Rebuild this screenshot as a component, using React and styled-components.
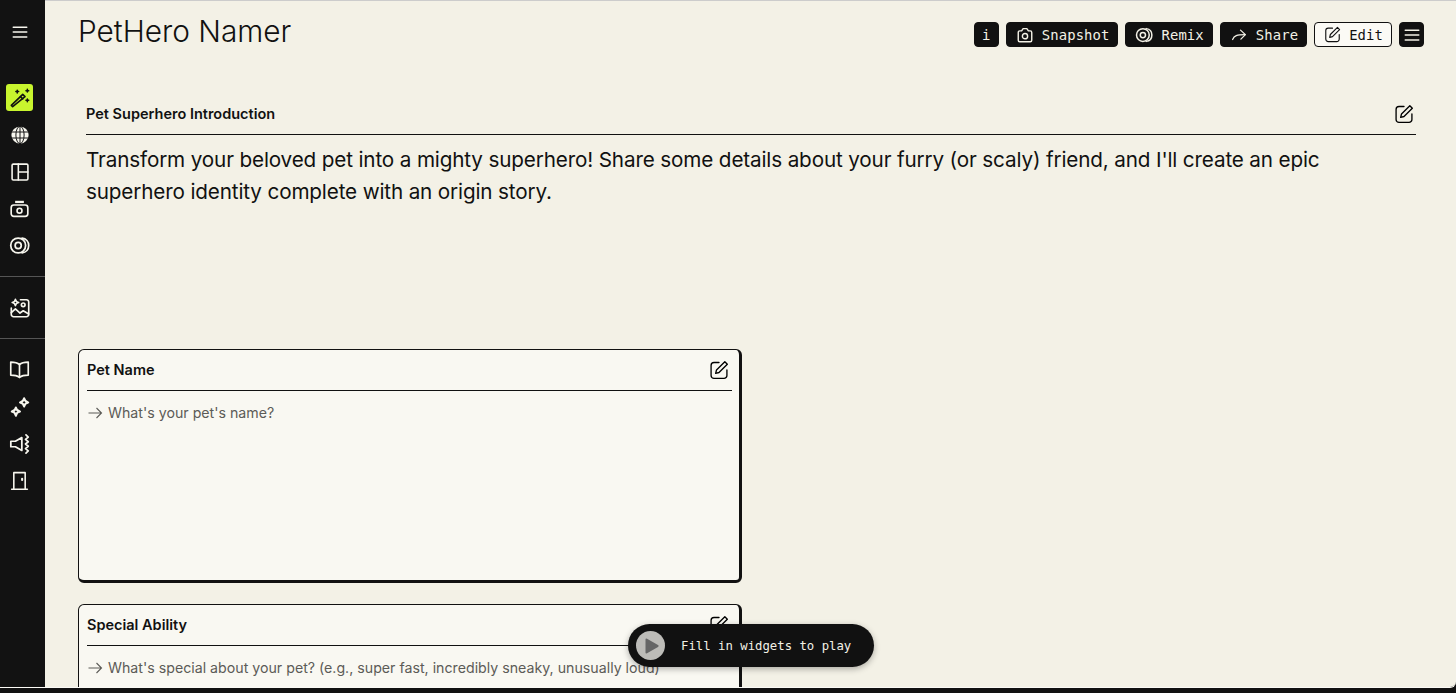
import React from 'react'
import styled, { createGlobalStyle } from 'styled-components'

const Global = createGlobalStyle`
html, body {
    margin: 0;
    height: 100%;
    background: #111;
}
* { box-sizing: border-box; }
`

const sans = `"Inter", "Noto Sans", sans-serif`
const mono = `"DejaVu Sans Mono", "Liberation Mono", monospace`

const Page = styled.div`
position: relative;
height: 693px;
overflow: hidden;
display: flex;
flex-direction: column;
background: #111;
`
const Body = styled.div`
display: flex;
height: 688px;
border-bottom: 1px solid #fbfaf5;
border-bottom-right-radius: 6px;
overflow: hidden;
flex: none;
`
const Rail = styled.nav`
width: 45px;
flex: none;
background: #121212;
color: #f7f6ee;
display: flex;
flex-direction: column;
`
const RailSection = styled.div`
padding: ${props => props.first ? '13px 0 12px' : '12px 0'};
border-bottom: ${props => props.last ? 'none' : '1px solid #555'};
`
const RailItem = styled.div`
height: 37px;
padding-right: 6px;
display: flex;
align-items: center;
justify-content: center;
margin-bottom: ${props => props.spaced ? '29px' : '0'};
`
const ActiveItem = styled.div`
width: 27px;
height: 27px;
border-radius: 3px;
background: #c8f52e;
color: #111;
display: flex;
align-items: center;
justify-content: center;
`
const Content = styled.main`
flex: 1;
min-width: 0;
background: #f3f1e6;
border-top: 1px solid #ccc;
padding: 0 32px 0 33px;
overflow: hidden;
`
const Header = styled.header`
height: 94px;
display: flex;
justify-content: space-between;
align-items: flex-start;
`
const Title = styled.h1`
margin: 11px 0 0;
font-family: ${sans};
font-weight: 300;
font-size: 29.8px;
line-height: 38px;
color: #111;
`
const Toolbar = styled.div`
display: flex;
gap: 7px;
margin-top: 21px;
`
const ToolButton = styled.button`
height: 25px;
min-width: 25px;
padding: ${props => props.square ? '0' : '0 8px 0 9px'};
display: flex;
align-items: center;
justify-content: center;
gap: 8px;
border-radius: 4px;
border: 1px solid #111;
background: ${props => props.light ? '#fbfaf5' : '#111'};
color: ${props => props.light ? '#111' : '#f3f1e6'};
font-family: ${mono};
font-size: 13.9px;
font-weight: 400;
letter-spacing: 0.1px;
`
const Intro = styled.section`
margin: 0 8px 0 8px;
height: 254px;
`
const IntroHead = styled.div`
height: 40px;
display: flex;
justify-content: space-between;
align-items: center;
padding-right: 2px;
padding-bottom: 2px;
border-bottom: 1px solid #111;
`
const Label = styled.span`
font-family: ${sans};
font-size: 14.5px;
font-weight: 600;
color: #111;
`
const IntroText = styled.p`
margin: 9px 0 0;
font-family: ${sans};
font-size: 20.7px;
letter-spacing: -0.15px;
line-height: 32px;
color: #111;
`
const Card = styled.section`
width: 664px;
height: 234px;
flex: none;
margin-bottom: 21px;
padding: 0 7px 0 8px;
background: #f9f8f2;
border: 1px solid #111;
border-right-width: 3px;
border-bottom-width: 3px;
border-radius: 6px;
`
const CardHead = styled.div`
height: 41px;
display: flex;
justify-content: space-between;
align-items: center;
padding-right: 3px;
padding-bottom: 1px;
border-bottom: 1px solid #111;
`
const Prompt = styled.div`
margin-top: 13px;
display: flex;
align-items: center;
gap: 5px;
padding-left: 1px;
font-family: ${sans};
font-size: 14.2px;
line-height: 18px;
color: #5c5b57;
white-space: nowrap;
`
const PlayPill = styled.div`
position: absolute;
left: 628px;
top: 624px;
width: 246px;
height: 43px;
border-radius: 22px;
padding-left: 8px;
background: #111;
box-shadow: 0 2px 6px rgba(0, 0, 0, 0.3);
display: flex;
align-items: center;
gap: 16px;
color: #f3f1e6;
font-family: ${mono};
font-size: 12.3px;
`
const PlayDisc = styled.div`
width: 29px;
height: 29px;
border-radius: 50%;
background: #bdbcb8;
display: flex;
align-items: center;
justify-content: center;
`

const Icon = ({ size = 20, width = 1.8, children }) => (
    <svg width={size} height={size} viewBox="0 0 24 24" fill="none" stroke="currentColor" strokeWidth={width} strokeLinecap="round" strokeLinejoin="round">
        {children}
    </svg>
)

const MenuIcon = () => <Icon size={18} width={2}><path d="M3 5.5h18M3 12h18M3 18.5h18" /></Icon>
const WandIcon = () => (
    <Icon size={22} width={1.7}>
        <path d="M4 21.500 2.500 20 15 8l2.500 2.500z" />
        <path d="m12.500 10.500 2.500 2.500" />
        <path d="M9 3.500v3M7.500 5h3M20 2.500v3M18.500 4h3M20 13v3M18.500 14.500h3" />
    </Icon>
)
const GlobeIcon = () => (
    <svg width="18" height="18" viewBox="0 0 24 24" fill="currentColor" stroke="#121212" strokeWidth="1.3">
        <circle cx="12" cy="12" r="11.500" stroke="none" />
        <path d="M0 8h24M0 16h24M12 0v24" fill="none" />
        <ellipse cx="12" cy="12" rx="5.500" ry="11.500" fill="none" />
    </svg>
)
const LayoutIcon = () => (
    <Icon size={20} width={1.9}>
        <rect x="2.500" y="2.500" width="19" height="19" rx="1.500" />
        <path d="M10 2.500v19M10 12h11.500" />
    </Icon>
)
const CameraRetroIcon = () => (
    <Icon size={21} width={1.9}>
        <rect x="2.500" y="8" width="19" height="13" rx="3" />
        <circle cx="12" cy="14.500" r="2.800" />
        <path d="M7 4.500h10" strokeWidth="2.600" strokeLinecap="butt" />
    </Icon>
)
const RemixIcon = ({ size = 21 }) => (
    <Icon size={size} width={2}>
        <circle cx="10.500" cy="12" r="8.500" />
        <circle cx="10.500" cy="12" r="3.500" />
        <path d="M15 3.500c4.500.5 7.500 4 7.500 8.500s-3 8-7.500 8.500" />
    </Icon>
)
const GalleryIcon = () => (
    <Icon size={22} width={1.8}>
        <path d="M12.500 3H19a2.500 2.500 0 0 1 2.500 2.500V19a2.500 2.500 0 0 1-2.500 2.500H5A2.500 2.500 0 0 1 2.500 19v-7" />
        <circle cx="15.500" cy="8.500" r="2" />
        <path d="m2.500 17 4.500-4 5 4.500 3.500-2.500 6 3.500" />
        <path d="M7 2.500c.4 2.200 1.300 3.100 3.500 3.500-2.200.4-3.100 1.300-3.500 3.500-.4-2.200-1.300-3.100-3.500-3.500 2.200-.4 3.100-1.300 3.500-3.500z" />
    </Icon>
)
const BookIcon = () => (
    <Icon size={21} width={1.9}>
        <path d="M12 6.500C10 4.500 7 3.500 2 3.500v15c5 0 8 1 10 2.500 2-1.500 5-2.500 10-2.500v-15c-5 0-8 1-10 3z" />
        <path d="M12 6.500V21" />
    </Icon>
)
const SparkIcon = () => (
    <Icon size={22} width={2.2}>
        <path d="M16.500 2.500c.5 2.700 1.800 4 4.500 4.500-2.700.5-4 1.800-4.500 4.500-.5-2.700-1.800-4-4.500-4.500 2.700-.5 4-1.800 4.500-4.500z" />
        <path d="M7.500 12.500c.5 2.700 1.800 4 4.500 4.500-2.700.5-4 1.800-4.500 4.500-.5-2.700-1.800-4-4.500-4.500 2.700-.5 4-1.800 4.500-4.500z" />
    </Icon>
)
const SpeakerIcon = () => (
    <Icon size={22} width={1.9}>
        <path d="M2 9h5l7-4v14l-7-4H2z" />
        <path d="M18.500 2 21 4.500 18 7l3 2.500L18 12l3 2.500-3 2.500 3 2.500-2.500 2.500" />
    </Icon>
)
const DoorIcon = () => (
    <Icon size={21} width={1.8}>
        <path d="M5.500 22V3h13v19M3 22h18" />
        <path d="M15 10v1.500" strokeWidth="2.400" />
    </Icon>
)
const CameraIcon = () => (
    <Icon size={18} width={1.9}>
        <path d="M3 8.500A2 2 0 0 1 5 6.500h2.500L9.500 3.500h5l2 3H19a2 2 0 0 1 2 2V19a2 2 0 0 1-2 2H5a2 2 0 0 1-2-2z" />
        <circle cx="12" cy="13.500" r="3.500" />
    </Icon>
)
const ShareIcon = () => (
    <Icon size={18} width={1.7}>
        <path d="M3.500 18c2-5 5.500-6.500 16.500-6.500" />
        <path d="m14 5.500 6.500 6-6 6" />
    </Icon>
)
const EditIcon = ({ size = 20, width = 1.6 }) => (
    <Icon size={size} width={width}>
        <path d="M12 3H6a3.500 3.500 0 0 0-3.500 3.500v12A3.500 3.500 0 0 0 6 22h12a3.500 3.500 0 0 0 3.500-3.500V12" />
        <path d="m8 16 1-4L19 2l3 3-10 10z" />
    </Icon>
)
const ArrowIcon = () => (
    <svg width="15" height="12" viewBox="0 0 15 12" fill="none" stroke="#5c5b57" strokeWidth="1.1">
        <path d="M0.500 6h13M8.500 1l5 5-5 5" />
    </svg>
)
const PlayIcon = () => (
    <svg width="14" height="16" viewBox="0 0 14 16" fill="#666" style={{ marginLeft: 2 }}>
        <path d="M0.500 1.500a1 1 0 0 1 1.500-.8l11 6.400a1 1 0 0 1 0 1.800l-11 6.400a1 1 0 0 1-1.500-.8z" />
    </svg>
)

const tools = [
    { text: 'Snapshot', icon: <CameraIcon /> },
    { text: 'Remix', icon: <RemixIcon size={18} /> },
    { text: 'Share', icon: <ShareIcon /> },
]

const fields = [
    { label: 'Pet Name', prompt: "What's your pet's name?" },
    { label: 'Special Ability', prompt: "What's special about your pet? (e.g., super fast, incredibly sneaky, unusually loud)" },
]

const App = () => {
    return (
        <Page>
            <Global />
            <Body>
                <Rail>
                    <RailSection first>
                        <RailItem spaced><MenuIcon /></RailItem>
                        <RailItem><ActiveItem><WandIcon /></ActiveItem></RailItem>
                        <RailItem><GlobeIcon /></RailItem>
                        <RailItem><LayoutIcon /></RailItem>
                        <RailItem><CameraRetroIcon /></RailItem>
                        <RailItem><RemixIcon /></RailItem>
                    </RailSection>
                    <RailSection>
                        <RailItem><GalleryIcon /></RailItem>
                    </RailSection>
                    <RailSection last>
                        <RailItem><BookIcon /></RailItem>
                        <RailItem><SparkIcon /></RailItem>
                        <RailItem><SpeakerIcon /></RailItem>
                        <RailItem><DoorIcon /></RailItem>
                    </RailSection>
                </Rail>
                <Content>
                    <Header>
                        <Title>PetHero Namer</Title>
                        <Toolbar>
                            <ToolButton square>i</ToolButton>
                            {tools.map(t => (
                                <ToolButton key={t.text}>{t.icon}{t.text}</ToolButton>
                            ))}
                            <ToolButton light><EditIcon size={17} />Edit</ToolButton>
                            <ToolButton square><MenuIcon /></ToolButton>
                        </Toolbar>
                    </Header>
                    <Intro>
                        <IntroHead>
                            <Label>Pet Superhero Introduction</Label>
                            <EditIcon />
                        </IntroHead>
                        <IntroText>
                            Transform your beloved pet into a mighty superhero! Share some details about your furry (or scaly) friend, and I'll create an epic superhero identity complete with an origin story.
                        </IntroText>
                    </Intro>
                    {fields.map(f => (
                        <Card key={f.label}>
                            <CardHead>
                                <Label>{f.label}</Label>
                                <EditIcon />
                            </CardHead>
                            <Prompt><ArrowIcon />{f.prompt}</Prompt>
                        </Card>
                    ))}
                </Content>
            </Body>
            <PlayPill>
                <PlayDisc><PlayIcon /></PlayDisc>
                Fill in widgets to play
            </PlayPill>
        </Page>
    )
}

export default App
